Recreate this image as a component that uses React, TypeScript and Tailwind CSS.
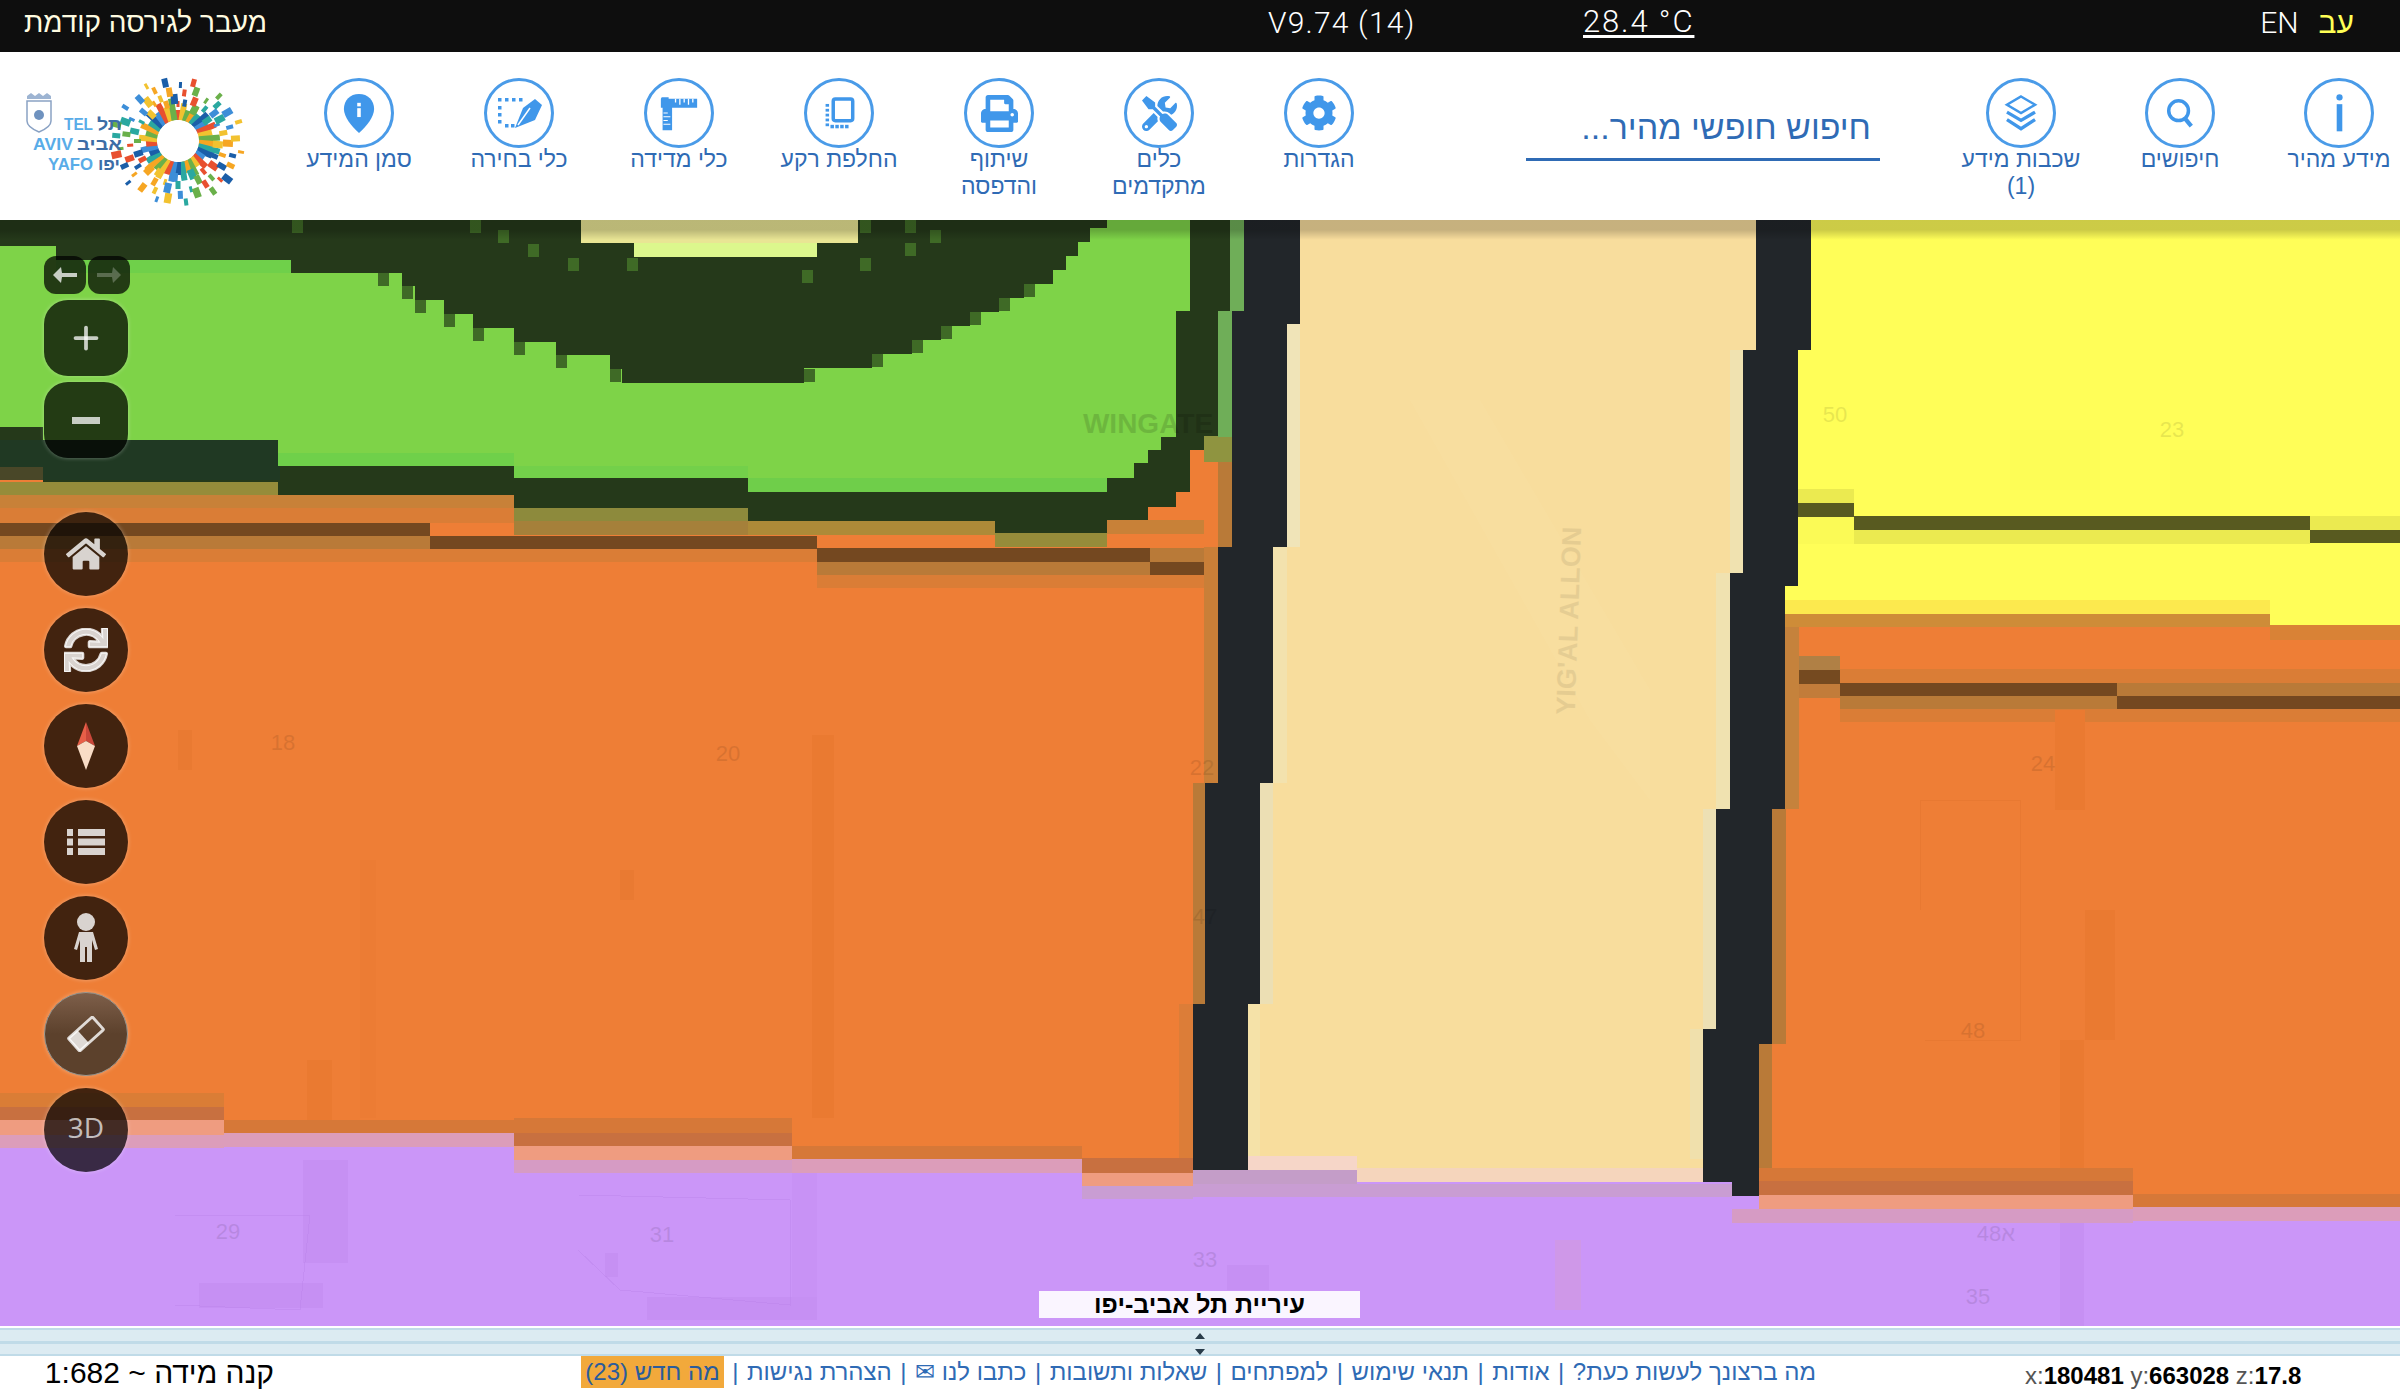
import type { ReactNode } from 'react'
import { Plus } from 'lucide-react'
import { FaCog, FaHome, FaPrint, FaSync, FaTools } from 'react-icons/fa'

type Band = [number, number, number, number, string]

const ORANGE = '#ee7e36'
const PURPLE = '#cb96f8'
const EDGE = '#d67838'
const EDGE_DARK = '#c87040'
const SALMON = '#ef9c80'
const PINK = '#dc9dba'
const HAZE = '#c99dd3'
const TAN = '#b97a38'
const BROWN = '#744820'
const OLIVE = '#968c3a'
const AMBER = '#c88138'
const SOFT = '#da7d36'

// Stepped outlines read off the tiles, x and y in page pixels
const darkGreen =
  '0,220 1230,220 1230,311 1218,311 1218,436 1204,436 1204,450 1190,450 1190,492 1176,492 1176,507 1148,507 1148,520 1107,520 1107,533 995,533 995,521 748,521 748,508 514,508 514,495 278,495 278,482 43,482 43,467 0,467'
const lightGreen =
  '0,246 56,246 56,260 291,260 291,273 375,273 402,273 402,286 415,286 415,300 444,300 444,314 473,314 473,328 514,328 514,342 556,342 556,355 610,355 610,369 622,369 622,383 804,383 804,368 872,368 872,354 912,354 912,340 941,340 941,326 970,326 970,312 999,312 999,298 1024,298 1024,284 1053,284 1053,270 1066,270 1066,256 1078,256 1078,242 1090,242 1090,228 1107,228 1107,220 1190,220 1190,311 1176,311 1176,437 1161,437 1161,450 1148,450 1148,463 1134,463 1134,478 1107,478 1107,492 995,492 995,478 748,478 748,466 514,466 514,453 278,453 278,440 43,440 43,427 0,427'
const orangeLeft = '0,430 1260,430 1260,1158 1082,1158 1082,1146 792,1146 792,1118 514,1118 514,1120 0,1120'
const orangeRight = '1750,600 2400,600 2400,1194 2133,1194 2133,1168 1750,1168'
const roadLeft =
  '1244,220 1300,220 1300,324 1287,324 1287,547 1273,547 1273,783 1260,783 1260,1004 1248,1004 1248,1170 1193,1170 1193,1004 1205,1004 1205,783 1218,783 1218,547 1232,547 1232,311 1244,311'
const roadRight =
  '1756,220 1811,220 1811,350 1798,350 1798,586 1785,586 1785,809 1772,809 1772,1044 1759,1044 1759,1196 1732,1196 1732,1182 1703,1182 1703,1029 1716,1029 1716,809 1730,809 1730,573 1743,573 1743,350 1756,350'

const bands: Band[] = [
  // under the park, left to right
  [0, 482, 278, 13, OLIVE],
  [0, 495, 514, 13, AMBER],
  [0, 508, 514, 15, SOFT],
  [278, 495, 236, 13, AMBER],
  [514, 508, 234, 13, '#8d8a3c'],
  [514, 521, 234, 14, '#a5803a'],
  [748, 521, 247, 14, '#ad8a38'],
  [995, 533, 112, 14, OLIVE],
  [0, 523, 430, 13, BROWN],
  [0, 536, 430, 13, TAN],
  [430, 536, 387, 13, BROWN],
  [0, 549, 817, 13, SOFT],
  [817, 548, 333, 14, BROWN],
  [817, 562, 333, 13, TAN],
  [1150, 548, 68, 14, TAN],
  [1150, 562, 68, 13, BROWN],
  [817, 575, 400, 13, SOFT],
  [1107, 520, 97, 14, AMBER],
  [1204, 436, 28, 26, '#8f9440'],
  [1218, 462, 14, 85, TAN],
  [1204, 547, 14, 236, '#c97f38'],
  [1193, 783, 12, 221, TAN],
  [1179, 1004, 14, 154, '#dc7d38'],
  // orange into purple, left part
  [0, 1093, 224, 14, SOFT],
  [0, 1107, 224, 13, EDGE_DARK],
  [0, 1120, 224, 15, SALMON],
  [0, 1135, 224, 13, PINK],
  [224, 1120, 290, 13, EDGE],
  [224, 1133, 290, 14, PINK],
  [514, 1118, 278, 15, EDGE],
  [514, 1133, 278, 13, EDGE_DARK],
  [514, 1146, 278, 14, SALMON],
  [514, 1160, 278, 13, '#d69bc4'],
  [792, 1146, 290, 13, EDGE],
  [792, 1159, 290, 14, PINK],
  [1082, 1158, 111, 15, EDGE_DARK],
  [1082, 1173, 111, 13, SALMON],
  [1082, 1186, 111, 13, HAZE],
  // orange into purple, right part
  [1759, 1168, 374, 13, EDGE],
  [1759, 1181, 374, 14, EDGE_DARK],
  [1759, 1195, 374, 14, SALMON],
  [1732, 1209, 401, 14, '#d69bc4'],
  [2133, 1194, 267, 13, EDGE],
  [2133, 1207, 267, 14, PINK],
  // yellow into orange
  [1785, 600, 485, 14, '#fce94e'],
  [1785, 614, 485, 13, '#ce8c38'],
  [2270, 625, 130, 15, '#d98236'],
  [1840, 669, 560, 14, SOFT],
  [1785, 656, 55, 14, '#b08045'],
  [1785, 670, 55, 14, '#754a20'],
  [1840, 683, 277, 14, BROWN],
  [1840, 696, 277, 13, TAN],
  [2117, 683, 283, 13, TAN],
  [2117, 696, 283, 13, BROWN],
  [1840, 709, 560, 13, SOFT],
  [1785, 684, 55, 14, '#c27c3a'],
  [1785, 627, 14, 182, '#c5823c'],
  [1772, 809, 14, 235, TAN],
  [1759, 1044, 13, 124, TAN],
  // yellow power line
  [1798, 489, 56, 14, '#ebea50'],
  [1798, 503, 56, 14, '#585a20'],
  [1854, 516, 456, 14, '#585a20'],
  [1854, 530, 456, 14, '#ebea50'],
  [2310, 516, 90, 14, '#ebea50'],
  [2310, 530, 90, 13, '#585a20'],
  [1798, 517, 56, 27, '#fbfa56'],
  // pale shoulder beside the road
  [1287, 324, 13, 223, '#f0e4b8'],
  [1273, 547, 14, 236, '#f3e2ae'],
  [1260, 783, 13, 221, '#ecdfb4'],
  [1248, 1004, 12, 152, '#f5e2a8'],
  [1730, 350, 13, 223, '#f0e2b0'],
  [1716, 573, 14, 236, '#f0e2b0'],
  [1703, 809, 13, 220, '#ede0b4'],
  [1690, 1029, 13, 130, '#f0e0ac'],
  // beige running into the purple
  [1248, 1156, 109, 14, '#f6d6c8'],
  [1193, 1170, 164, 14, '#c49dc8'],
  [1357, 1168, 346, 14, '#f5d5bc'],
  [1193, 1184, 539, 13, HAZE],
  // park rim
  [1230, 220, 14, 91, '#6fae58'],
  [1218, 311, 14, 126, '#6fae58'],
  [56, 260, 235, 13, '#6fd04a'],
  [278, 453, 236, 13, '#6fd04a'],
  [514, 466, 234, 12, '#73d04a'],
  [748, 478, 247, 14, '#6fce4a'],
  [995, 478, 112, 14, '#6fce4a'],
  // gap at the top of the park
  [581, 220, 277, 23, '#e9e594'],
  [634, 243, 183, 14, '#dcf78d'],
]

// single lighter tiles along the dark ring
const tiles: [number, number][] = [
  [292, 220], [470, 220], [498, 230], [528, 244], [568, 258], [627, 258], [802, 270], [860, 220], [905, 220],
  [930, 230], [905, 243], [860, 258], [378, 273], [402, 286], [415, 300], [444, 314], [473, 328], [514, 342],
  [556, 355], [610, 369], [804, 369], [872, 354], [912, 340], [941, 326], [970, 312], [999, 298], [1024, 284],
]

// faint parcel fill, the vector data bleeding through the tiles
const parcels: Band[] = [
  [178, 730, 14, 40, '#e97a32'],
  [620, 870, 14, 30, '#e97a32'],
  [812, 735, 22, 383, '#ea7a31'],
  [307, 1060, 25, 60, '#ea7a31'],
  [360, 860, 16, 258, '#ec7c34'],
  [303, 1160, 45, 103, '#c690f3'],
  [199, 1283, 124, 25, '#c690f3'],
  [605, 1253, 13, 24, '#c690f3'],
  [647, 1297, 170, 23, '#c690f3'],
  [792, 1173, 25, 124, '#c892f5'],
  [1227, 1265, 42, 25, '#c690f3'],
  [1555, 1240, 26, 70, '#cf98e8'],
  [2055, 710, 30, 100, '#ea7a31'],
  [2085, 910, 30, 130, '#ea7a31'],
  [2060, 1040, 24, 128, '#ea7a31'],
  [2060, 1223, 24, 103, '#c690f3'],
  [2010, 430, 90, 60, '#fdfd56'],
  [2170, 450, 60, 60, '#fdfd56'],
]

const mapLabels: [string, number, number][] = [
  ['18', 283, 750],
  ['20', 728, 761],
  ['22', 1202, 775],
  ['47', 1205, 924],
  ['48', 1973, 1038],
  ['24', 2043, 771],
  ['50', 1835, 422],
  ['23', 2172, 437],
  ['29', 228, 1239],
  ['31', 662, 1242],
  ['33', 1205, 1267],
  ['35', 1978, 1304],
  ['א48', 1996, 1241],
]

const MapLayer = () => (
  <svg viewBox="0 220 2400 1106" className="absolute inset-0 h-full w-full font-['Liberation_Sans',sans-serif]" shapeRendering="crispEdges">
    <rect x="0" y="220" width="2400" height="1106" fill={PURPLE} />
    <polygon points={orangeLeft} fill={ORANGE} />
    <polygon points={orangeRight} fill={ORANGE} />
    <rect x="1780" y="220" width="620" height="394" fill="#fffe58" />
    <rect x="2270" y="600" width="130" height="25" fill="#fffe58" />
    <rect x="1248" y="220" width="520" height="950" fill="#f8dd9d" />
    <polygon points="1410,400 1480,400 1650,690 1650,800 1590,720" fill="#f8de9f" />
    <polygon points={darkGreen} fill="#25391a" />
    <polygon points="0,290 330,290 330,340 0,350" fill="#243c22" opacity="0.7" />
    <polygon points="0,440 280,440 280,480 0,480" fill="#1f3a26" opacity="0.8" />
    <polygon points={lightGreen} fill="#7ed348" />
    {bands.map(([x, y, w, h, fill], i) => (
      <rect key={i} x={x} y={y} width={w} height={h} fill={fill} />
    ))}
    {tiles.map(([x, y], i) => (
      <rect key={i} x={x} y={y} width="11" height="13" fill="#3f6a26" />
    ))}
    {parcels.map(([x, y, w, h, fill], i) => (
      <rect key={i} x={x} y={y} width={w} height={h} fill={fill} />
    ))}
    <polyline points="175,1215 310,1215 300,1310 175,1305" fill="none" stroke="#b983e8" strokeWidth="1" opacity="0.4" />
    <polyline points="578,1195 790,1200 790,1305 620,1290 578,1250" fill="none" stroke="#b983e8" strokeWidth="1" opacity="0.4" />
    <polyline points="1920,910 1920,800 2020,800 2020,1040 1925,1040" fill="none" stroke="#d96e2a" strokeWidth="1" opacity="0.3" />
    <polygon points={roadLeft} fill="#22262a" />
    <polygon points={roadRight} fill="#22262a" />
    {mapLabels.map(([label, x, y]) => (
      <text key={label} x={x} y={y} textAnchor="middle" fontSize="22" fill="#000" opacity="0.09">
        {label}
      </text>
    ))}
    <text x="1148" y="433" textAnchor="middle" fontSize="28" fontWeight="700" fill="#000" opacity="0.13">
      WINGATE
    </text>
    <text x="0" y="0" transform="translate(1578 621) rotate(-88)" textAnchor="middle" fontSize="27" fontWeight="700" fill="#000" opacity="0.07">
      YIG'AL ALLON
    </text>
  </svg>
)

const TelAvivLogo = () => {
  const colors = ['#e8502f', '#f6a623', '#3d8ed8', '#6ab04a', '#1b5ea8', '#f2c230', '#2aa8a0']
  const ring = Array.from({ length: 38 }, (_, i) => i)
  const scatter = Array.from({ length: 84 }, (_, i) => i)
  return (
    <svg viewBox="0 0 279 168" className="h-[168px] w-[279px] font-['Liberation_Sans',sans-serif]">
      {/* emblem */}
      <path d="M27 49h24v20q0 6-12 11q-12-5-12-11z" fill="#fff" stroke="#8aa2c4" strokeWidth="1.5" />
      <path d="M27 44l4-3 4 3 4-3 4 3 4-3 4 3v3H27z" fill="#9db4d2" />
      <circle cx="39" cy="63" r="5" fill="#6f92bf" />
      {ring.map((i) => {
        const angle = (i / ring.length) * 360
        const len = 10 + ((i * 7) % 13)
        return (
          <rect key={i} x="175" y={89 - 21 - len} width="6" height={len} fill={colors[(i * 5) % colors.length]} transform={`rotate(${angle} 178 89)`} />
        )
      })}
      {scatter.map((i) => {
        const angle = i * 137.5
        const dist = 40 + ((i * 13) % 29)
        const size = 3 + (i % 5)
        return (
          <rect key={i} x={178 - size / 2} y={89 - dist} width={size} height={size + 3} fill={colors[(i * 3) % colors.length]} transform={`rotate(${angle} 178 89)`} />
        )
      })}
      <circle cx="178" cy="89" r="20" fill="#fff" />
      <text x="64" y="78" textLength="29" lengthAdjust="spacingAndGlyphs" fontSize="17" fontWeight="700" fill="#59ace8">TEL</text>
      <text x="97" y="78" textLength="25" lengthAdjust="spacingAndGlyphs" fontSize="17" fontWeight="700" fill="#3c6da6">תל</text>
      <text x="33" y="98" textLength="40" lengthAdjust="spacingAndGlyphs" fontSize="17" fontWeight="700" fill="#59ace8">AVIV</text>
      <text x="77" y="98" textLength="45" lengthAdjust="spacingAndGlyphs" fontSize="17" fontWeight="700" fill="#3c6da6">אביב</text>
      <text x="48" y="118" textLength="45" lengthAdjust="spacingAndGlyphs" fontSize="17" fontWeight="700" fill="#59ace8">YAFO</text>
      <text x="98" y="118" textLength="22" lengthAdjust="spacingAndGlyphs" fontSize="17" fontWeight="700" fill="#3c6da6">יפו</text>
    </svg>
  )
}

const ToolButton = ({ icon, lines, className = 'w-[160px]' }: { icon: ReactNode; lines: string[]; className?: string }) => (
  <div className={`flex shrink-0 flex-col items-center pt-[26px] ${className}`}>
    <div className="flex h-[70px] w-[70px] items-center justify-center rounded-full border-[3px] border-[#4a9be8] text-[#4097ea]">
      {icon}
    </div>
    <div dir="rtl" className="-mt-[2px] text-center text-[23px] leading-[27px] text-[#2f6bb5]">
      {lines.map((line) => (
        <div key={line}>{line}</div>
      ))}
    </div>
  </div>
)

const Toolbar = () => (
  <div className="flex h-[168px] shrink-0 bg-white">
    <div className="w-[279px] shrink-0">
      <TelAvivLogo />
    </div>
    <ToolButton
      lines={['סמן המידע']}
      icon={
        <svg viewBox="0 0 36 46" className="h-[43px] w-[32px]">
          <path d="M18 1C8 1 1 8 1 18c0 9 9 20 17 27 8-7 17-18 17-27C35 8 28 1 18 1z" fill="#4097ea" />
          <rect x="16" y="17" width="4" height="10" fill="#fff" />
          <rect x="16" y="11" width="4" height="4" fill="#fff" />
        </svg>
      }
    />
    <ToolButton
      lines={['כלי בחירה']}
      icon={
        <svg viewBox="0 0 47 32" className="h-[32px] w-[47px]" fill="#4097ea">
          {[2, 9, 16, 23].map((x) => (
            <rect key={x} x={x} y="1" width="3.5" height="3.5" />
          ))}
          {[9, 16, 23].map((y) => (
            <rect key={y} x="2" y={y} width="3.5" height="3.5" />
          ))}
          {[9, 15].map((x) => (
            <rect key={x} x={x} y="27" width="3.5" height="3.5" />
          ))}
          <path d="M46 8l-7-6-12 9-8 20 20-8z" />
          <path d="M34 11l-12 17" stroke="#fff" strokeWidth="1.5" />
        </svg>
      }
    />
    <ToolButton
      lines={['כלי מדידה']}
      icon={
        <svg viewBox="0 0 44 48" preserveAspectRatio="none" className="h-[36px] w-[38px]" fill="#4097ea">
          <path d="M2 3h8v2h33v12H14v30H3V17H1V5z" />
          <path d="M18 5v5M23 5v8M28 5v5M33 5v8M38 5v5M4 24h5M4 29h8M4 34h5M4 39h8" stroke="#fff" strokeWidth="1.5" />
        </svg>
      }
    />
    <ToolButton
      lines={['החלפת רקע']}
      icon={
        <svg viewBox="0 0 44 46" className="h-[32px] w-[31px]" fill="#4097ea">
          <rect x="13" y="3" width="28" height="31" rx="3" fill="none" stroke="#4097ea" strokeWidth="5" />
          {[10, 17, 24, 31, 38].map((y) => (
            <rect key={y} x="2" y={y} width="5" height="4" />
          ))}
          {[9, 16, 23, 30].map((x) => (
            <rect key={x} x={x} y="40" width="5" height="5" />
          ))}
        </svg>
      }
    />
    <ToolButton lines={['שיתוף', 'והדפסה']} icon={<FaPrint size={37} />} />
    <ToolButton lines={['כלים', 'מתקדמים']} icon={<FaTools size={35} />} />
    <ToolButton lines={['הגדרות']} icon={<FaCog size={36} />} />
    <div className="flex w-[542px] shrink-0 flex-col items-end pt-[44px] pr-[61px]">
      <div dir="rtl" className="pr-[9px] text-[34px] leading-[62px] text-[#2f6bb5]">
        חיפוש חופשי מהיר...
      </div>
      <div className="h-[3px] w-[354px] bg-[#2f6bb5]" />
    </div>
    <ToolButton
      lines={['שכבות מידע', '(1)']}
      icon={
        <svg viewBox="0 0 40 46" className="h-[38px] w-[36px]" fill="none" stroke="#4097ea" strokeWidth="3">
          <path d="M20 3l17 10-17 10L3 13z" />
          <path d="M3 22l17 10 17-10" strokeWidth="4" />
          <path d="M3 31l17 11 17-11" strokeWidth="4" />
        </svg>
      }
    />
    <ToolButton
      className="w-[158px]"
      lines={['חיפושים']}
      icon={
        <svg viewBox="0 0 40 44" className="h-[31px] w-[30px]" fill="none" stroke="#4097ea">
          <circle cx="18" cy="18" r="14" strokeWidth="5" />
          <path d="M27 29l9 11" strokeWidth="6" />
        </svg>
      }
    />
    <div className="shrink-0 pl-[19px]">
      <ToolButton
        className="w-[122px]"
        lines={['מידע מהיר']}
        icon={
          <svg viewBox="0 0 10 56" preserveAspectRatio="none" className="h-[38px] w-[7px]" fill="#4097ea">
            <circle cx="5" cy="5" r="4.5" />
            <rect x="1" y="15" width="8" height="40" />
          </svg>
        }
      />
    </div>
  </div>
)

const RoundButton = ({ children, className = '' }: { children: ReactNode; className?: string }) => (
  <div className={`flex h-[84px] w-[84px] items-center justify-center rounded-full bg-black/72 text-white/80 shadow-[0_0_4px_rgba(255,255,255,0.35)] ${className}`}>
    {children}
  </div>
)

const MapControls = () => (
  <div className="absolute top-[36px] left-[44px] flex w-[86px] flex-col">
    <div className="flex gap-[2px]">
      <div className="flex h-[38px] w-[42px] items-center justify-center rounded-[12px] bg-black/72">
        <svg viewBox="0 0 24 16" className="h-[16px] w-[24px] text-white/75" fill="currentColor">
          <path d="M8 0L0 8l8 8 1-6h15V6H9z" />
        </svg>
      </div>
      <div className="flex h-[38px] w-[42px] items-center justify-center rounded-[12px] bg-black/72">
        <svg viewBox="0 0 24 16" className="h-[16px] w-[24px] text-white/25" fill="currentColor">
          <path d="M16 0l8 8-8 8-1-6H0V6h15z" />
        </svg>
      </div>
    </div>
    <div className="mt-[6px] flex h-[76px] w-[84px] items-center justify-center rounded-[24px] bg-black/72 text-white/75 shadow-[0_0_4px_rgba(255,255,255,0.35)]">
      <Plus size={36} strokeWidth={2.5} />
    </div>
    <div className="mt-[6px] flex h-[76px] w-[84px] items-center justify-center rounded-[24px] bg-black/72 shadow-[0_0_4px_rgba(255,255,255,0.35)]">
      <div className="h-[7px] w-[28px] bg-white/75" />
    </div>
    <div className="mt-[54px] flex flex-col gap-[12px]">
      <RoundButton>
        <FaHome size={40} />
      </RoundButton>
      <RoundButton>
        <FaSync size={44} stroke="currentColor" strokeWidth={24} />
      </RoundButton>
      <RoundButton>
        <svg viewBox="0 0 20 50" className="h-[50px] w-[20px]">
          <path d="M10 1L1 25l9-5z" fill="#e85f48" />
          <path d="M10 1l9 24-9-5z" fill="#c9473a" />
          <path d="M1 25l9-5 9 5-9 24z" fill="#f9dcc6" />
        </svg>
      </RoundButton>
      <RoundButton>
        <svg viewBox="0 0 38 26" className="h-[26px] w-[38px]" fill="currentColor">
          {[0, 9.5, 19].map((y) => (
            <g key={y}>
              <rect x="0" y={y} width="6" height="7" />
              <rect x="11" y={y} width="27" height="7" />
            </g>
          ))}
        </svg>
      </RoundButton>
      <RoundButton>
        <svg viewBox="0 0 26 50" className="h-[50px] w-[26px]" fill="currentColor">
          <circle cx="13" cy="9" r="9" />
          <path d="M6 19h14l5 17-3 1-3-10v22h-5V34h-2v15H7V27L4 37l-3-1z" />
        </svg>
      </RoundButton>
      <RoundButton className="border border-[#9a9a94] bg-linear-to-b from-[#7e5f4a] via-[#5c412c] to-[#5c412c]">
        <svg viewBox="0 0 40 36" className="h-[36px] w-[38px]" fill="none" stroke="currentColor" strokeWidth="3">
          <g transform="rotate(-42 20 18)">
            <rect x="3" y="9" width="34" height="18" rx="1" />
            <rect x="3" y="9" width="13" height="18" fill="currentColor" stroke="none" />
          </g>
        </svg>
      </RoundButton>
      <RoundButton>
        <span className="pb-[6px] font-['Open_Sans',sans-serif] text-[28px] text-white/70">3D</span>
      </RoundButton>
    </div>
  </div>
)

const footerLinks = ['מה ברצונך לעשות כעת?', 'אודות', 'תנאי שימוש', 'למפתחים', 'שאלות ותשובות', 'כתבו לנו ✉', 'הצהרת נגישות']

const Footer = () => (
  <div className="flex h-[36px] shrink-0 items-start bg-white">
    <div dir="rtl" className="ml-[40px] w-[234px] whitespace-nowrap text-[30px] leading-[34px] text-black">
      קנה מידה ~ <span dir="ltr">1:682</span>
    </div>
    <div dir="rtl" className="ml-[306px] flex h-[32px] w-[1236px] shrink-0 items-center whitespace-nowrap text-[24px] leading-[32px] text-[#2f6bb5]">
      {footerLinks.map((link) => (
        <span key={link} className="flex items-center">
          <span>{link}</span>
          <span className="mx-[8.5px] text-[#2f6bb5]">|</span>
        </span>
      ))}
      <span className="bg-[#f2a93b] px-[4px] text-[#2b5c9c]">מה חדש (23)</span>
    </div>
    <div className="ml-[209px] whitespace-nowrap pt-[7px] text-[24px] leading-[26px] text-[#555]">
      x:<b className="text-black">180481</b> y:<b className="text-black">663028</b> z:<b className="text-black">17.8</b>
    </div>
  </div>
)

export default function App() {
  return (
    <div className="flex h-screen w-full flex-col overflow-hidden font-['Liberation_Sans',sans-serif]">
      <div className="flex h-[52px] shrink-0 items-center bg-[#0e0e0e] pb-[7px] text-white">
        <div dir="rtl" className="ml-[24px] w-[1244px] text-left text-[28px] text-[#fffbe0]">
          מעבר לגירסה קודמת
        </div>
        <div className="w-[315px] font-['Roboto',sans-serif] text-[30px] font-light tracking-[0.04em]">V9.74 (14)</div>
        <div className="font-['Roboto',sans-serif] text-[31px] font-light tracking-[0.06em] underline decoration-[3px] underline-offset-[3px]">28.4 °C</div>
        <div className="ml-auto flex items-center gap-[20px] pr-[46px] font-['Roboto',sans-serif] text-[30px] font-light">
          <span>EN</span>
          <span className="font-['Liberation_Sans',sans-serif] text-[#ffff55]">עב</span>
        </div>
      </div>
      <Toolbar />
      <div className="relative flex-1 overflow-hidden">
        <MapLayer />
        <div className="absolute inset-x-0 top-0 h-[20px] bg-linear-to-b from-black/20 via-black/20 to-transparent" />
        <MapControls />
        <div dir="rtl" className="absolute bottom-[8px] left-[1039px] flex h-[27px] w-[321px] items-center justify-center bg-[#faf5ff] text-[25px] font-bold text-black">
          עיריית תל אביב-יפו
        </div>
      </div>
      <div className="h-[2px] shrink-0 bg-white" />
      <div className="relative flex h-[28px] shrink-0 flex-col justify-center border-y-2 border-[#c0dbe8] bg-[#dcebf2]">
        <div className="h-[3px] bg-[#c0dbe8]" />
        <svg viewBox="0 0 12 22" className="absolute top-[3px] left-[1194px] h-[22px] w-[12px]" fill="#2a3c4a">
          <path d="M6 0l5 6H1zM6 22l5-6H1z" />
        </svg>
      </div>
      <Footer />
    </div>
  )
}
